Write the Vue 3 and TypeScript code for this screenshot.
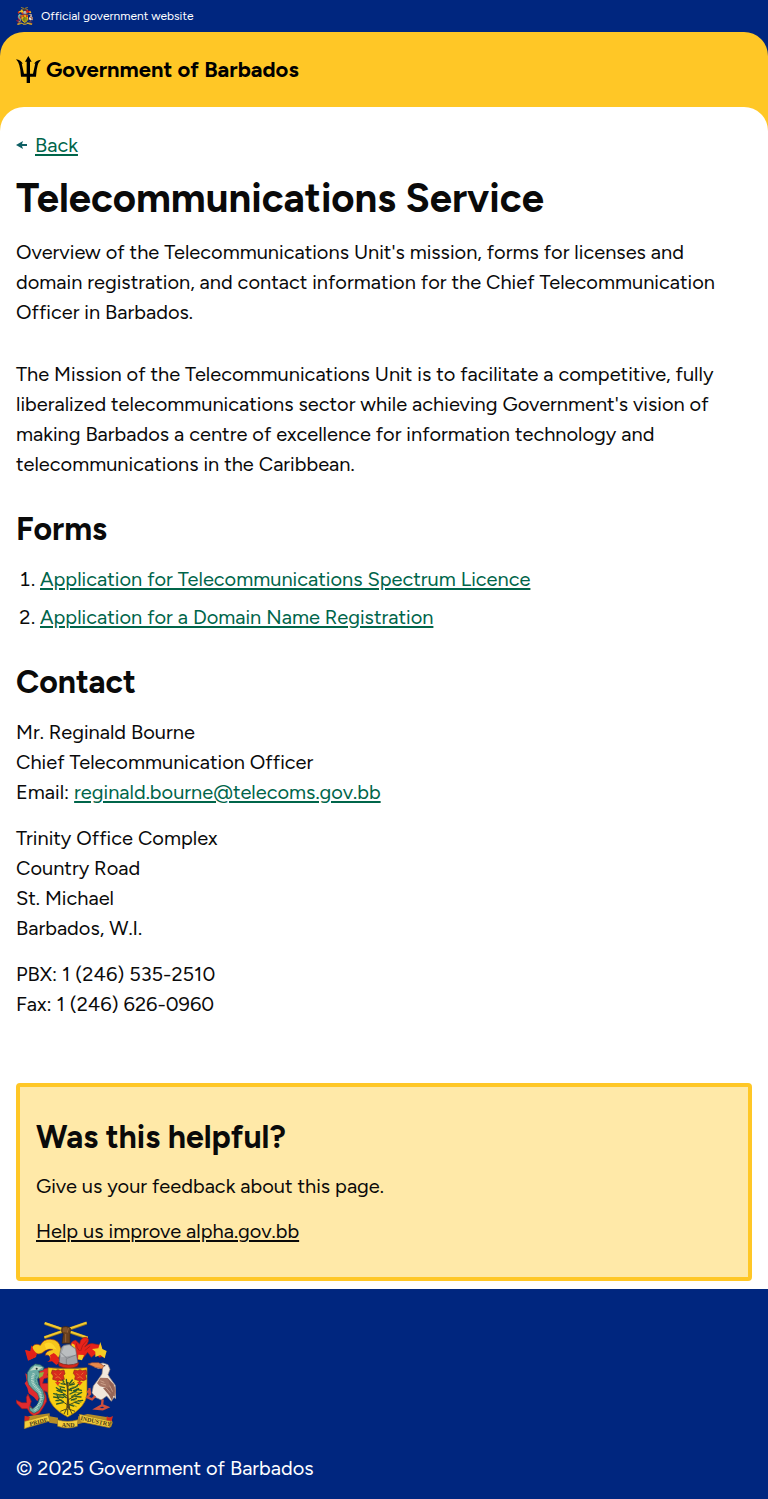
<script setup lang="ts">
interface FormLink {
  label: string
  href: string
}

const forms: FormLink[] = [
  { label: 'Application for Telecommunications Spectrum Licence', href: '#spectrum-licence' },
  { label: 'Application for a Domain Name Registration', href: '#domain-name' },
]

const address: string[] = ['Trinity Office Complex', 'Country Road', 'St. Michael', 'Barbados, W.I.']
const phones: string[] = ['PBX: 1 (246) 535-2510', 'Fax: 1 (246) 626-0960']
</script>

<template>
  <div class="page">
    <div class="official">
      <svg class="official-crest" viewBox="24 21 300 324" aria-hidden="true"><use href="#coat-of-arms" /></svg>
      <span>Official government website</span>
    </div>

    <div class="header-wrap">
      <header class="header">
        <a class="brand" href="#home">
          <svg class="trident" viewBox="0 0 75 81" aria-hidden="true">
            <path d="M37 0 47 17H42V53H51L58 22L54 24Q60 12 75 11Q67 19 65 28Q61 42 60 62H42V81H32V62H15Q14 42 10 28Q8 18 0 10Q15 12 21 24L17 22L24 53H32V17H27Z" />
          </svg>
          <span>Government of Barbados</span>
        </a>
      </header>
    </div>

    <div class="main-wrap">
      <main class="main">
        <nav class="back">
          <svg class="arrow" viewBox="0 0 11 10" aria-hidden="true">
            <path d="M0 5 7 1 6 4H11V6H6L7 9Z" />
          </svg>
          <a href="#back">Back</a>
        </nav>

        <h1>Telecommunications Service</h1>
        <p class="lead">
          Overview of the Telecommunications Unit's mission, forms for licenses and domain registration, and contact
          information for the Chief Telecommunication Officer in Barbados.
        </p>
        <p>
          The Mission of the Telecommunications Unit is to facilitate a competitive, fully liberalized
          telecommunications sector while achieving Government's vision of making Barbados a centre of excellence for
          information technology and telecommunications in the Caribbean.
        </p>

        <h2>Forms</h2>
        <ol class="forms">
          <li v-for="form in forms" :key="form.href"><a :href="form.href">{{ form.label }}</a></li>
        </ol>

        <h2>Contact</h2>
        <div class="contact">
          <p>
            Mr. Reginald Bourne<br />
            Chief Telecommunication Officer<br />
            Email: <a href="mailto:reginald.bourne@telecoms.gov.bb">reginald.bourne@telecoms.gov.bb</a>
          </p>
          <p><span v-for="line in address" :key="line" class="line">{{ line }}</span></p>
          <p><span v-for="line in phones" :key="line" class="line">{{ line }}</span></p>
        </div>

        <section class="feedback">
          <h2>Was this helpful?</h2>
          <p>Give us your feedback about this page.</p>
          <p><a href="#feedback">Help us improve alpha.gov.bb</a></p>
        </section>
      </main>
    </div>

    <footer class="footer">
      <svg class="crest" viewBox="24 21 300 324" role="img" aria-label="Coat of arms of Barbados">
        <g id="coat-of-arms">
          <!-- crest: crossed sugar canes held in a hand -->
          <path d="M109 71 236 27M110 28 239 72" stroke="#9a7c1c" stroke-width="9" />
          <path d="M109 70 236 26M110 27 239 71" stroke="#f1ca31" stroke-width="6" />
          <path d="M162 88 166 60 160 51 162 40 171 37 182 39 189 45 186 57 186 88Z" fill="#68401f" stroke="#382315" stroke-width="2" />
          <path d="M168 41V54M174 40V55M181 42 178 56M173 60V85" stroke="#ae7444" stroke-width="2" fill="none" />

          <!-- mantling -->
          <path d="M158 103Q154 77 128 76Q107 74 97 94Q83 86 73 98L68 113 54 110 62 138 84 128 83 117Q96 125 110 111Q122 101 134 107Q113 110 112 124Q125 120 127 135Q139 142 150 133L165 109Z" fill="#f6c51c" stroke="#a63b14" stroke-width="2" />
          <path d="M70 94 77 108 87 120 82 130 60 140 51 108 67 112ZM137 117Q151 124 156 144L145 153 132 142 118 144Q131 137 126 124Z" fill="#e32018" />
          <path d="M109 90Q125 79 137 94L146 107Q129 98 115 107Z" fill="#ffd62c" />
          <path d="M187 101Q186 82 203 79L215 90Q218 69 235 70Q246 74 238 89L230 99Q245 85 260 90L279 94 281 112 290 126 274 130 264 119 250 130 239 115 225 133 210 137 197 125Z" fill="#e7221a" stroke="#9b2213" stroke-width="2" />
          <path d="M277 84 283 105 296 111 290 133 277 123 262 129 262 113 252 105 271 103ZM191 88 200 92 203 107 191 104ZM211 122 228 123 222 139 210 136Z" fill="#f5cc24" />
          <path d="M205 88Q205 103 215 111M237 79Q220 94 218 111M247 96 230 110" stroke="#991b14" stroke-width="2" fill="none" />

          <!-- helmet -->
          <path d="M153 151 156 117Q158 99 168 94L184 91 203 104 205 119 210 149Q184 166 153 151Z" fill="#a2a4a8" stroke="#65676b" stroke-width="2" />
          <path d="M168 97Q164 113 157 119L160 130 204 122 201 106 184 94Z" fill="#bbbec0" />
          <path d="M159 116 177 133 206 122M175 134V154" stroke="#707377" stroke-width="2" fill="none" />
          <path d="M151 145Q180 160 213 146L208 157Q180 169 153 156Z" fill="#d6261c" stroke="#792015" stroke-width="2" />

          <!-- dolphin: red fins and tail, then the scaled body -->
          <path d="M62 184 52 178 56 200 50 208 58 222 62 238 78 250 88 262 96 246 80 224 70 206Z" fill="#e02a2e" />
          <path d="M93 168 119 162 124 171 118 182 124 190 108 194 104 208 126 208 130 226 121 236 108 230 114 244 116 262 106 280 94 298 78 306 66 298 58 284 42 284 26 268 24 258 42 266 56 266 55 250 60 240 70 262 66 274 74 284 88 280 98 262 98 246Z" fill="#e02a2e" stroke="#8f1d22" stroke-width="2" />
          <path d="M58 198 58 176 68 160 82 150 96 152 108 160 106 168 92 172 96 184 88 196 92 212 104 228 110 250 104 272 92 290 78 298 66 290 64 278 74 284 88 272 94 254 88 238 74 226 62 212Z" fill="#69aaa3" stroke="#28605c" stroke-width="2" />
          <path d="M78 178Q66 200 82 218Q106 240 98 264L80 290" stroke="#b5d6cb" stroke-width="8" stroke-dasharray="3 2" fill="none" />
          <path d="M86 183Q76 200 92 218Q108 238 101 262L90 282" stroke="#267775" stroke-width="3" stroke-dasharray="2 3" fill="none" />
          <path d="M66 170 80 156 104 160 92 168 78 168Z" fill="#c3dbc8" />
          <path d="M94 176 108 174 104 186 92 194Z" fill="#8cb341" />
          <circle cx="86" cy="164" r="3" fill="#252f32" />

          <!-- shield -->
          <path d="M120 161Q178 166 237 161V240Q234 280 179 309Q124 281 120 240Z" fill="#f8cf13" stroke="#9b6818" stroke-width="2" />
          <g fill="#d72a1d" stroke="#8f2b19" stroke-width="2">
            <path id="arms-flower" d="M133 168 143 170 150 167 157 170 168 168 171 180 166 184 169 196 160 200 153 198 149 204 144 199 134 196 136 186 130 178Z" />
            <use href="#arms-flower" x="66" />
          </g>
          <path d="M140 178 146 184M160 176 154 182M142 192 150 188 158 194M206 178 212 184M226 176 220 182M208 192 216 188 224 194" stroke="#ef963a" stroke-width="2" fill="none" />
          <path d="M141 204H158L149 215ZM207 204H224L215 215Z" fill="#e43b1b" />

          <!-- fig tree -->
          <path d="M175 282Q180 238 174 204H182Q179 249 187 284Z" fill="#56451b" />
          <path d="M179 273 146 250M179 258 214 239M178 247 151 226M179 232 207 216M180 274 213 259M178 284 157 292M180 284 201 292M177 282 168 300M183 281 193 301M179 285V303M179 215 163 204M178 218 199 204" stroke="#524a19" stroke-width="3" fill="none" />
          <g stroke="#28582a" stroke-width="4" stroke-linecap="round" fill="none">
            <path d="M168 204 164 198M171 211 159 209M184 210 193 198M187 213 199 210M169 221 156 218M187 224 202 220M161 235 147 229M162 234 157 223M156 229 145 221M171 241 154 243M186 240 206 230M197 230 212 224M209 242 221 235M203 248 219 249M190 258 205 254M213 261 224 259M201 265 213 269M184 272 197 276M166 263 157 258M157 258 144 260M148 251 137 249M151 253 146 240M167 250 153 249M165 266 146 270M151 242 137 239M205 218 211 211M205 226 220 229M176 207 175 196M180 225 191 230M173 231 163 228M191 249 202 241M175 251 166 244" />
          </g>
          <g stroke="#5c7a26" stroke-width="2" stroke-linecap="round" fill="none">
            <path d="M161 219 151 215M166 229 156 232M192 219 209 218M197 235 215 236M190 246 207 243M158 246 141 242M163 254 149 263M196 260 219 265M193 272 205 278" />
          </g>

          <!-- pelican -->
          <path d="M258 158 272 164 284 162 282 180 268 200 256 216 252 236 262 250 280 258 296 246 310 262 318 250 324 254 322 214 306 192 300 182 306 166 300 152 285 147 270 150Z" fill="#f2e8dc" stroke="#9a8577" stroke-width="2" />
          <path d="M240 150 252 146 272 146 288 156 282 164 262 160Z" fill="#e98a4b" stroke="#9a4831" stroke-width="2" />
          <path d="M277 191 299 192 317 210 325 231 321 248 306 241 293 221 276 217 267 208Z" fill="#a77563" />
          <path d="M300 194 315 212 320 232 312 260 302 242 285 222 308 220Z" fill="#956456" />
          <path d="M277 200 289 205M278 208 294 213M295 222 308 238M305 215 314 233" stroke="#dcb39b" stroke-width="2" />
          <circle cx="290" cy="155" r="2" fill="#2f292c" />
          <path d="M262 246 252 256 238 250 246 240 238 230M246 240 244 222M284 256 282 274 264 284 284 286 298 280 284 274" fill="none" stroke="#cf503c" stroke-width="7" />

          <!-- motto ribbon -->
          <path d="M53 311 65 306 125 298 125 307 150 311 149 330 124 326 121 316 66 331 50 342ZM211 307 239 300 309 311 314 326 309 340 245 326 224 327 208 331Z" fill="#b68d26" />
          <path d="M50 322 120 303 126 321 64 339 49 344Z" fill="#f3cd3c" stroke="#9c7523" stroke-width="2" />
          <path d="M148 317Q179 327 210 317L208 337Q180 347 149 337Z" fill="#f3cd3c" stroke="#9c7523" stroke-width="2" />
          <path d="M214 301 307 321 305 341 217 323Z" fill="#f3cd3c" stroke="#9c7523" stroke-width="2" />
          <path d="M50 305 66 309 62 319 49 321ZM296 306 303 311 315 306 311 321 296 319Z" fill="#d32a1f" />
          <g class="motto">
            <text transform="translate(66 336) rotate(-14)">PRIDE</text>
            <text x="161" y="338">AND</text>
            <text transform="translate(217 318) rotate(12)">INDUSTRY</text>
          </g>
        </g>
      </svg>
      <p>© 2025 Government of Barbados</p>
    </footer>
  </div>
</template>

<style>
body {
  margin: 0;
}
</style>

<style scoped>
.page {
  font-family: Figtree, Lato, "Open Sans", sans-serif;
  font-size: 20px;
  line-height: 30px;
  color: #0a0a0a;
  background: #fff;
  -webkit-font-smoothing: antialiased;
}

p,
h1,
h2,
ol {
  margin: 0;
}

a {
  color: #00654a;
  text-decoration-thickness: 2px;
  text-underline-offset: 2px;
}

.official {
  display: flex;
  align-items: center;
  gap: 8px;
  height: 32px;
  padding: 0 16px;
  font-size: 12px;
  line-height: 16px;
  color: #fff;
  background: #00267f;
}

.official-crest {
  width: 17px;
  height: 18px;
}

.header-wrap {
  background: #00267f;
}

.header {
  padding: 24px 16px;
  border-radius: 24px 24px 0 0;
  background: #ffc726;
}

.brand {
  display: flex;
  align-items: center;
  gap: 5px;
  height: 27px;
  font-size: 22px;
  font-weight: 700;
  line-height: 27px;
  color: #000;
  text-decoration: none;
}

.trident {
  width: 25px;
  height: 27px;
}

.main-wrap {
  background: #ffc726;
}

.main {
  padding: 23px 16px 8px;
  border-radius: 24px 24px 0 0;
  background: #fff;
}

.back {
  display: flex;
  align-items: center;
  gap: 8px;
}

.arrow {
  width: 11px;
  height: 10px;
  fill: #0e5f64;
}

h1 {
  margin: 15px 0 16px;
  font-size: 40px;
  font-weight: 700;
  line-height: 46px;
}

.lead {
  margin-bottom: 32px;
}

h2 {
  margin: 31px 0 16px;
  font-size: 32px;
  font-weight: 700;
  line-height: 38px;
}

.forms {
  display: grid;
  gap: 8px;
  padding-left: 24px;
}

.contact {
  display: grid;
  gap: 16px;
}

.line {
  display: block;
}

.feedback {
  display: grid;
  gap: 15px;
  margin-top: 64px;
  padding: 31px 16px;
  border: 4px solid #ffc726;
  border-radius: 4px;
  background: #ffe9a8;
}

.feedback h2 {
  margin: 0;
}

.feedback a {
  color: inherit;
}

.footer {
  padding: 32px 16px 16px;
  color: #fff;
  background: #00267f;
}

.crest {
  display: block;
  width: 100px;
  height: 108px;
  margin-bottom: 24px;
}

.motto {
  font-family: "Liberation Serif", serif;
  font-size: 18px;
  font-weight: 700;
  fill: #493817;
}
</style>
